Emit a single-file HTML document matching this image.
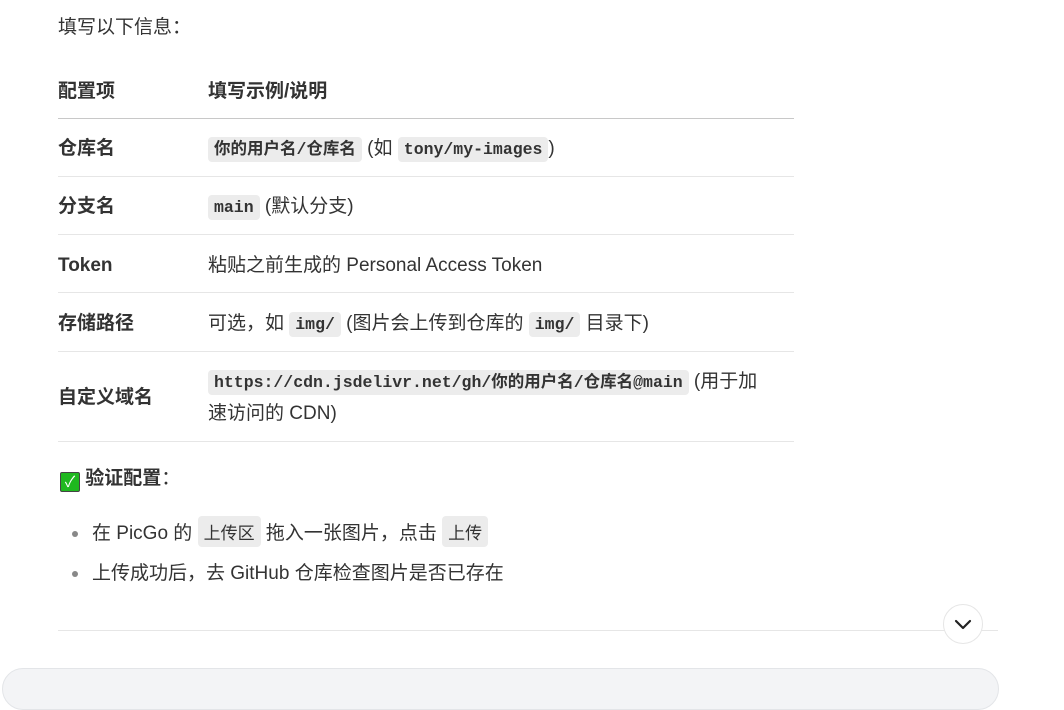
<!DOCTYPE html>
<html><head><meta charset="utf-8"><style>
body{margin:0;width:1064px;height:682px;overflow:hidden;background:#fff;font-family:"Liberation Sans","Noto Sans CJK SC",sans-serif;color:#333;font-size:19px;position:relative}
.a{position:absolute;white-space:nowrap;line-height:26px;margin-top:2px}
.b{font-weight:bold}
code{font-family:"Liberation Mono","Noto Sans CJK SC",monospace;font-weight:bold;font-size:16.5px;background:#ececec;border-radius:4px;padding:3px 6px;color:#333}
.ln{position:absolute;left:58px;width:736px;height:1px;background:#e6e6e6}
.dot{display:inline-block;width:6px;height:6px;border-radius:50%;background:#888;margin-right:14px;vertical-align:middle}
.cj{font-weight:normal;font-family:"Noto Sans CJK SC",sans-serif;font-size:17px}
</style></head><body>
<div class="a" style="left:58px;top:13px">填写以下信息：</div>
<div class="a b" style="left:58px;top:77px">配置项</div>
<div class="a b" style="left:208px;top:77px">填写示例/说明</div>
<div class="ln" style="top:118px;background:#c8c8c8"></div>
<div class="a b" style="left:58px;top:134px">仓库名</div>
<div class="a" style="left:208px;top:134px"><code>你的用户名/仓库名</code> (如 <code>tony/my-images</code>)</div>
<div class="ln" style="top:176px"></div>
<div class="a b" style="left:58px;top:192px">分支名</div>
<div class="a" style="left:208px;top:192px"><code>main</code> (默认分支)</div>
<div class="ln" style="top:234px"></div>
<div class="a b" style="left:58px;top:251px">Token</div>
<div class="a" style="left:208px;top:251px">粘贴之前生成的 Personal Access Token</div>
<div class="ln" style="top:292px"></div>
<div class="a b" style="left:58px;top:309px">存储路径</div>
<div class="a" style="left:208px;top:309px">可选，如 <code>img/</code> (图片会上传到仓库的 <code>img/</code> 目录下)</div>
<div class="ln" style="top:351px"></div>
<div class="a b" style="left:58px;top:383px">自定义域名</div>
<div class="a" style="left:208px;top:367px"><code>https://cdn.jsdelivr.net/gh/你的用户名/仓库名@main</code> (用于加</div>
<div class="a" style="left:208px;top:399px">速访问的 CDN)</div>
<div class="ln" style="top:441px"></div>
<div class="a" style="left:60px;top:464px"><span style="display:inline-block;width:20px;height:20px;background:#1fb81f;border:1px solid #444;border-radius:2px;color:#fff;font-size:15px;line-height:20px;text-align:center;vertical-align:-3px;box-sizing:border-box">✓</span> <b>验证配置</b>：</div>
<div class="a" style="left:72px;top:517px"><span class="dot"></span>在 PicGo 的 <code class="cj">上传区</code> 拖入一张图片，点击 <code class="cj">上传</code></div>
<div class="a" style="left:72px;top:559px"><span class="dot"></span>上传成功后，去 GitHub 仓库检查图片是否已存在</div>
<div style="position:absolute;left:58px;top:630px;width:940px;height:1px;background:#e6e6e6"></div>
<div style="position:absolute;left:943px;top:604px;width:38px;height:38px;border:1px solid #e6e6e6;border-radius:50%;background:#fff">
<svg width="38" height="38" viewBox="0 0 38 38"><path d="M12 16 L19 23 L26 16" fill="none" stroke="#222" stroke-width="2.2" stroke-linecap="round" stroke-linejoin="round"/></svg></div>
<div style="position:absolute;left:2px;top:668px;width:995px;height:40px;background:#f3f4f6;border:1px solid #e3e5e8;border-radius:22px"></div>
</body></html>
